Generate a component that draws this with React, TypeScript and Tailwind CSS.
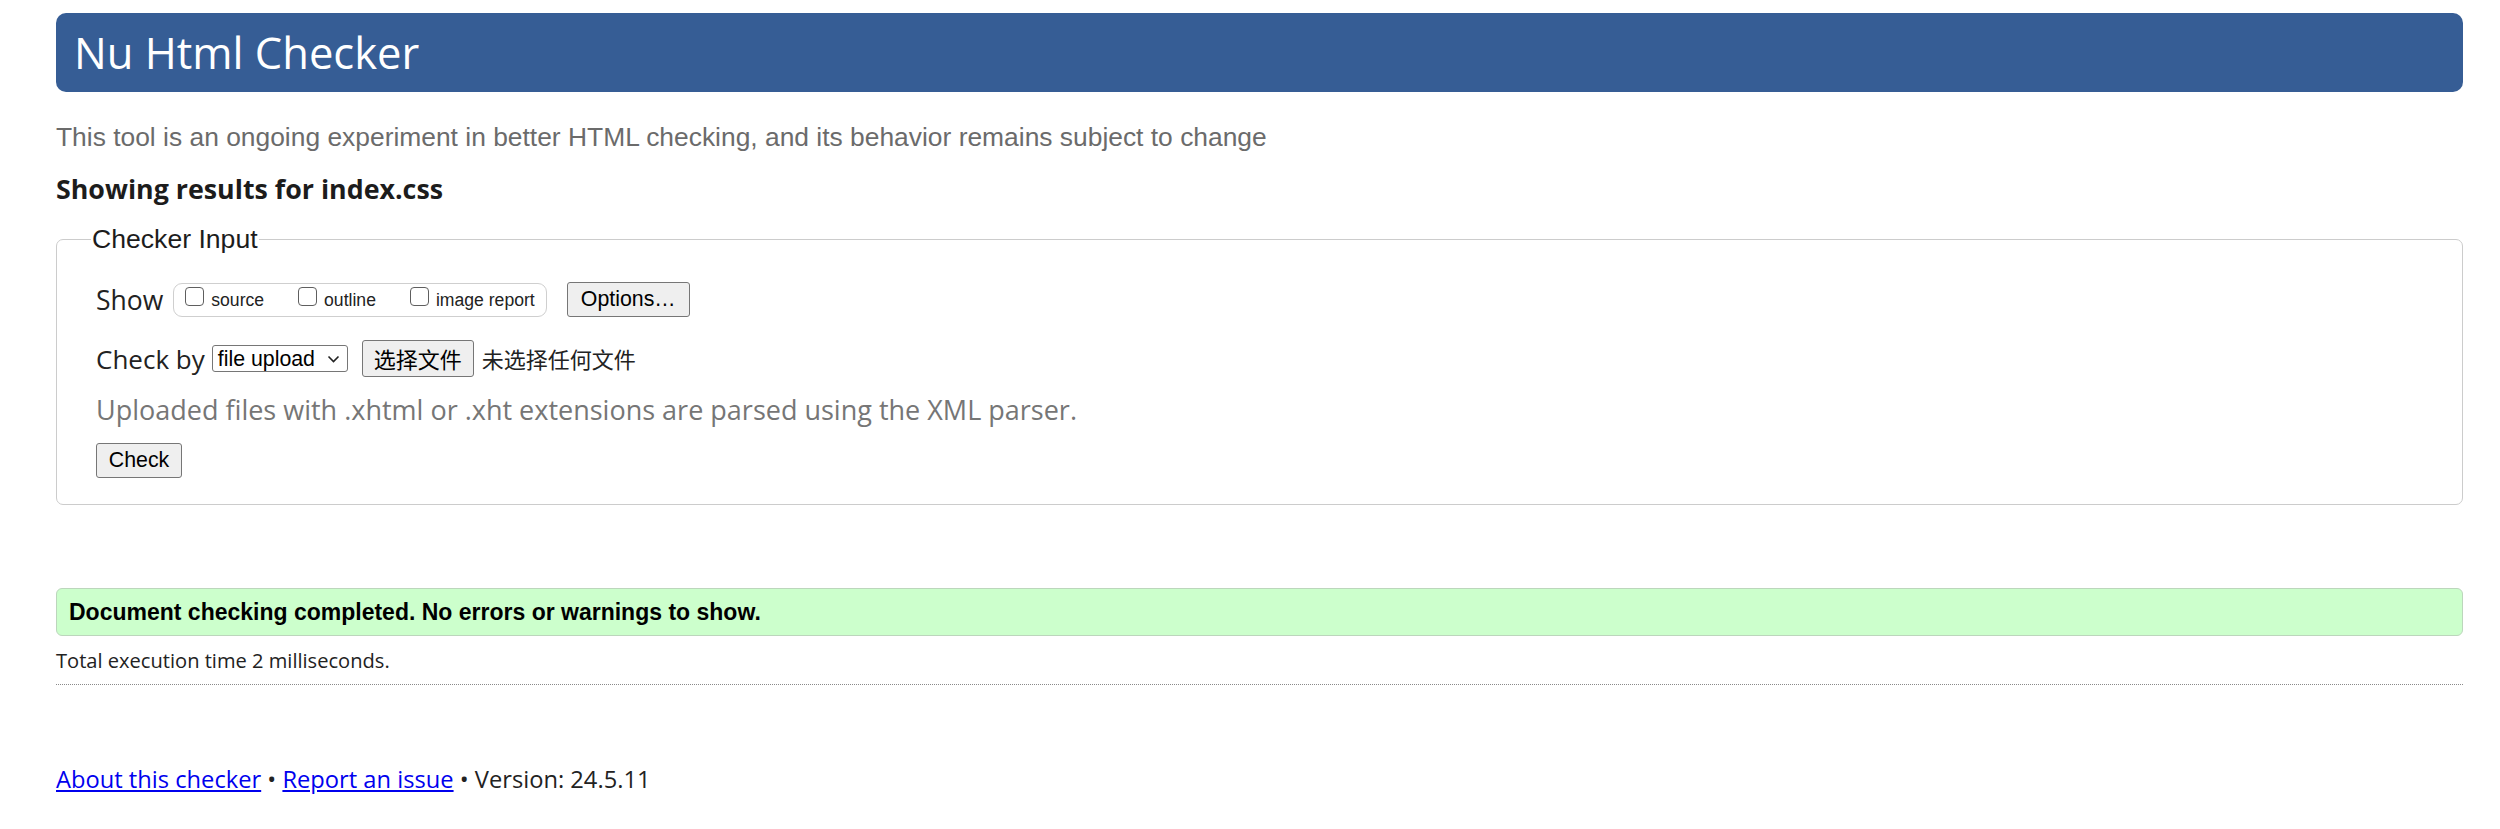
import React from "react";

const seg = "font-['Open_Sans','Noto_Sans',sans-serif]";
const ari = "font-['Liberation_Sans',Arial,sans-serif]";

function Btn({ children, className }: { children: React.ReactNode; className?: string }) {
  return (
    <button
      type="button"
      className={
        "flex items-center justify-center bg-[#efefef] border border-[#767676] rounded-[3px] text-black " +
        (className ?? "")
      }
    >
      {children}
    </button>
  );
}

function Check({ label }: { label: string }) {
  return (
    <label className="flex items-start">
      <input
        type="checkbox"
        className="appearance-none w-[19px] h-[19px] border border-[#5f5f5f] rounded-[4px] bg-white mt-[3px] shrink-0"
      />
      <span className={ari + " text-[17.6px] leading-[20px] text-[#222] ml-[7px] mt-[6px]"}>{label}</span>
    </label>
  );
}

export default function App() {
  return (
    <div className="min-h-screen bg-white pl-[56px] pr-[37px] pt-[13px]">
      <h1
        className={
          seg +
          " h-[79px] rounded-[10px] bg-[#365D95] text-white text-[43.5px] leading-[79px] pl-[18px] font-normal"
        }
      >
        Nu Html Checker
      </h1>

      <p className={ari + " mt-[30px] text-[26.4px] leading-[30px] text-[#6b6b6b]"}>
        This tool is an ongoing experiment in better HTML checking, and its behavior remains subject to change
      </p>

      <h2 className={seg + " mt-[21px] text-[26.8px] leading-[32px] font-bold text-[#1c1c1c]"}>
        Showing results for index.css
      </h2>

      <fieldset className="mt-[19px] border border-[#cccccc] rounded-[7px] pl-[39px] pb-[26px]">
        <legend className={ari + " -ml-[5px] px-[1px] text-[26.6px] leading-[30px] text-[#1c1c1c]"}>
          Checker Input
        </legend>

        <div className="mt-[28px] flex items-center h-[35px]">
          <span className={seg + " text-[26.5px] leading-[30px] text-[#222]"}>Show</span>
          <div className="ml-[10px] h-[34px] border border-[#cfcfcf] rounded-[9px] flex items-start pl-[11px] pr-[11px]">
            <Check label="source" />
            <div className="w-[34px]" />
            <Check label="outline" />
            <div className="w-[34px]" />
            <Check label="image report" />
          </div>
          <Btn className={ari + " ml-[20px] w-[123px] h-[35px] text-[21.33px]"}>Options…</Btn>
        </div>

        <div className="mt-[23px] flex items-center h-[37px]">
          <span className={seg + " text-[26px] leading-[30px] text-[#222]"}>Check by</span>
          <div className="ml-[7px] w-[136px] h-[27px] border border-[#767676] rounded-[3px] bg-white flex items-center pl-[5px] pr-[7px]">
            <span className={ari + " text-[21.33px] leading-[24px] text-black flex-1"}>file upload</span>
            <svg width="13" height="8" viewBox="0 0 13 8" fill="none">
              <path d="M1.5 1.5 L6.5 6.5 L11.5 1.5" stroke="#222" strokeWidth="1.6" />
            </svg>
          </div>
          <Btn
            className={
              "ml-[14px] w-[112px] h-[37px] text-[22px] font-['Noto_Sans_CJK_SC','Microsoft_YaHei',sans-serif]"
            }
          >
            选择文件
          </Btn>
          <span className="ml-[8px] text-[22px] text-[#222] font-['Noto_Sans_CJK_SC',sans-serif]">
            未选择任何文件
          </span>
        </div>

        <p className={seg + " mt-[18px] text-[27px] leading-[30px] text-[#767676]"}>
          Uploaded files with .xhtml or .xht extensions are parsed using the XML parser.
        </p>

        <Btn className={ari + " mt-[18px] w-[86px] h-[35px] text-[21.33px]"}>Check</Btn>
      </fieldset>

      <div className="mt-[83px] h-[48px] bg-[#ccffcc] border border-[#bcd6bc] rounded-[6px] flex items-center pl-[12px]">
        <span className={ari + " text-[23px] font-bold text-black"}>
          Document checking completed. No errors or warnings to show.
        </span>
      </div>

      <p className={seg + " mt-[13px] text-[20.1px] leading-[24px] text-[#222]"}>
        Total execution time 2 milliseconds.
      </p>

      <div className="mt-[11px] border-t border-dotted border-[#8a8a8a]" />

      <p className={seg + " mt-[79px] text-[23.7px] leading-[30px] text-[#222]"}>
        <a href="#" className="text-[#0000ee] underline">
          About this checker
        </a>{" "}
        •{" "}
        <a href="#" className="text-[#0000ee] underline">
          Report an issue
        </a>{" "}
        • Version: 24.5.11
      </p>
    </div>
  );
}
